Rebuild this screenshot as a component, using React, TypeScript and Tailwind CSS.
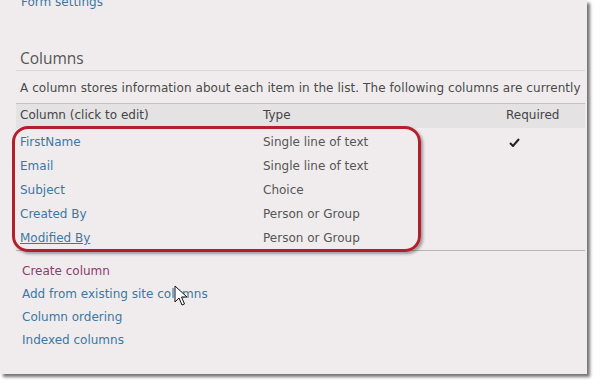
const ROWS = [
  { name: "FirstName", type: "Single line of text", req: true },
  { name: "Email", type: "Single line of text", req: false },
  { name: "Subject", type: "Choice", req: false },
  { name: "Created By", type: "Person or Group", req: false },
  { name: "Modified By", type: "Person or Group", req: false, underline: true },
];

const LINKS = [
  { label: "Create column", visited: true },
  { label: "Add from existing site columns" },
  { label: "Column ordering" },
  { label: "Indexed columns" },
];

const font = { fontFamily: '"DejaVu Sans", Verdana, sans-serif' };

function Cursor() {
  return (
    <svg width="14" height="22" viewBox="0 0 14 22" className="absolute left-[174px] top-[285px]">
      <path
        d="M1 1 L1 17 L5 13 L8 20 L10.5 19 L7.5 12 L13 12 Z"
        fill="#fff"
        stroke="#111"
        strokeWidth="1"
        strokeLinejoin="round"
      />
    </svg>
  );
}

export default function App() {
  return (
    <div className="w-[600px] h-[388px] bg-white overflow-hidden" style={font}>
      <div className="relative w-[587px] h-[374px] bg-[#f0ecee] overflow-hidden shadow-[3px_3px_3px_rgba(0,0,0,0.55)]">
        <div className="pl-4 pr-[2px]">
          {/* top link, cut by the frame */}
          <div className="-mt-[5px] h-[14px] leading-[14px] pl-[5px] text-[12px] text-[#3a78a3]">
            Form settings
          </div>

          {/* section title */}
          <div
            className="mt-[37px] h-[25px] leading-[24px] pl-[4px] text-[15.5px] text-[#555] border-b border-[#dcd8da]"
            style={{ fontFamily: '"Open Sans", sans-serif' }}
          >
            Columns
          </div>

          <div className="h-[32px] pt-[9px] leading-[16px] pl-[4px] text-[12px] tracking-[0.07px] text-[#4a4a4a] whitespace-nowrap">
            A column stores information about each item in the list. The following columns are currently
          </div>

          {/* table */}
          <div className="border-t border-[#c4c0c2]">
            <div className="grid grid-cols-[243px_243px_1fr] h-[24px] pb-[2px] items-center bg-[#e5e2e4] text-[12px] text-[#444]">
              <div className="pl-[4px]">Column (click to edit)</div>
              <div className="pl-[4px]">Type</div>
              <div className="pl-[4px]">Required</div>
            </div>
            <div className="pt-[2px] border-b border-[#b9b5b7]">
              {ROWS.map((r) => (
                <div
                  key={r.name}
                  className="grid grid-cols-[243px_243px_1fr] h-[24px] items-center text-[12px]"
                >
                  <div className={"pl-[4px] text-[#3a78a3] " + (r.underline ? "underline" : "")}>
                    {r.name}
                  </div>
                  <div className="pl-[4px] text-[#555]">{r.type}</div>
                  <div className="pl-[7px]">
                    {r.req && (
                      <svg width="11" height="9" viewBox="0 0 11 9">
                        <path d="M1 5 L4 8 L10 1" fill="none" stroke="#222" strokeWidth="2" />
                      </svg>
                    )}
                  </div>
                </div>
              ))}
            </div>
          </div>

          {/* links */}
          <div className="mt-[9px] pl-[6px] text-[12px]">
            {LINKS.map((l) => (
              <div
                key={l.label}
                className={"h-[23px] leading-[23px] " + (l.visited ? "text-[#8c3b6e]" : "text-[#3a78a3]")}
              >
                {l.label}
              </div>
            ))}
          </div>
        </div>

        {/* red annotation */}
        <div className="absolute left-[12px] top-[126px] w-[409px] h-[126px] rounded-[16px] border-[3px] border-[#b3202c] shadow-[2px_2px_3px_rgba(0,0,0,0.35)]" />

        <Cursor />
      </div>
    </div>
  );
}
